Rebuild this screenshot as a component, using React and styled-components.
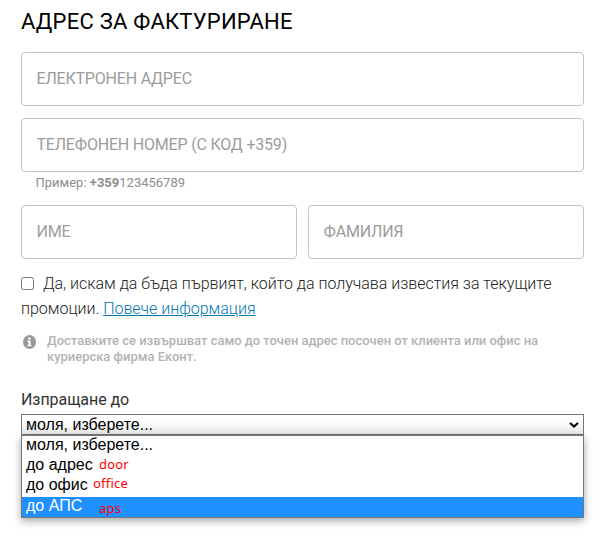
import React from 'react';
import styled, { createGlobalStyle, css } from 'styled-components';

const GlobalStyle = createGlobalStyle`
  *, *::before, *::after {
    box-sizing: border-box;
  }

  body {
    margin: 0;
    background: #fff;
    font-family: Roboto, 'Liberation Sans', sans-serif;
  }
`;

const Form = styled.form`
  display: flex;
  flex-direction: column;
  width: 584px;
  min-height: 551px;
  padding: 8px 0 0 21px;
`;

const Heading = styled.h1`
  margin: 0 0 18px;
  font-size: 22px;
  line-height: 27px;
  height: 26px;
  font-weight: 400;
  letter-spacing: 0.23px;
  text-transform: uppercase;
  white-space: nowrap;
  color: #000;
`;

const Fields = styled.div`
  display: grid;
  grid-template-columns: 1fr 1fr;
  column-gap: 11px;
`;

const Input = styled.input`
  width: 100%;
  min-width: 0;
  height: 54px;
  margin: 0 0 ${({ gap }) => gap || 0}px;
  padding: 0 15px 2px 14.5px;
  border: 1px solid #c4c4c4;
  border-radius: 4px;
  background: #fff;
  font-family: inherit;
  font-size: 16px;
  font-weight: 400;
  letter-spacing: -0.2px;
  outline: none;
  ${({ wide }) =>
    wide &&
    css`
      grid-column: 1 / -1;
    `}

  &::placeholder {
    color: #9c9c9c;
    opacity: 1;
  }
`;

const Hint = styled.p`
  grid-column: 1 / -1;
  margin: 3px 0 14px 14.5px;
  font-size: 13px;
  line-height: 16px;
  color: #8d8d8d;
`;

const Consent = styled.div`
  margin-top: 12px;
  font-size: 16px;
  line-height: 25px;
  font-weight: 300;
  letter-spacing: -0.02px;
  color: #222;
`;

const Checkbox = styled.input`
  width: 13px;
  height: 13px;
  margin: 0 9px 0 0;
  vertical-align: -1px;
`;

const Link = styled.a`
  color: #0079b0;
  text-decoration: underline;
`;

const Notice = styled.div`
  display: flex;
  gap: 11px;
  margin-top: 12px;
  padding-left: 2px;
  font-size: 13px;
  line-height: 16px;
  font-weight: 500;
  letter-spacing: -0.02px;
  color: #b3b3b3;

  svg {
    flex: none;
    margin-top: 2px;
  }

  p {
    margin: 0;
  }
`;

const Label = styled.span`
  margin-top: 25px;
  font-size: 16px;
  line-height: 20px;
  letter-spacing: -0.06px;
  color: #333;
`;

const Select = styled.div`
  position: relative;
  margin-top: 4px;
  font-family: 'Liberation Sans', Arial, sans-serif;
  font-size: 16px;
  color: #000;
`;

const SelectValue = styled.div`
  display: flex;
  align-items: center;
  justify-content: space-between;
  height: 21px;
  padding: 0 4px;
  border: 1px solid #767676;
  line-height: 19px;
  background: linear-gradient(#fff 30%, #e8e8e8);
`;

const Menu = styled.ul`
  position: absolute;
  top: 21px;
  left: 0;
  right: 0;
  height: 83px;
  margin: 0;
  padding: 0;
  border: 1px solid #767676;
  list-style: none;
  background: #fff;
  box-shadow: 0 3px 8px rgba(0, 0, 0, 0.35);
`;

const Option = styled.li`
  position: relative;
  height: 20px;
  padding-left: 4px;
  line-height: 17px;
  color: ${({ active }) => (active ? '#fff' : '#000')};
  background: ${({ active }) => (active ? '#1e90ff' : 'transparent')};

  &:last-child {
    margin-top: 1px;
  }
`;

const Note = styled.span`
  position: absolute;
  left: ${({ x }) => x}px;
  top: ${({ y }) => y}px;
  font-family: 'Noto Sans', 'Open Sans', sans-serif;
  font-size: 13px;
  font-weight: 400;
  letter-spacing: 0.2px;
  line-height: 17px;
  color: #f00;
`;

const InfoIcon = () => (
  <svg width="13" height="14" viewBox="0 0 13 14">
    <ellipse cx="6.5" cy="7" rx="6.5" ry="7" fill="#999" />
    <path d="M5.2 2.4h2.4v2.1H5.2zM4.5 5.6h3v4.4h.9v1.2H4.5V10h.9V6.9h-.9z" fill="#fff" />
  </svg>
);

const Chevron = () => (
  <svg width="10" height="6" viewBox="0 0 10 6" fill="none">
    <path d="M1 1l4 3.6L9 1" stroke="#000" strokeWidth="2" />
  </svg>
);

const options = [
  { label: 'моля, изберете...' },
  { label: 'до адрес', note: 'door', x: 77, y: 0 },
  { label: 'до офис', note: 'office', x: 71, y: -1 },
  { label: 'до АПС', note: 'aps', x: 77, y: 3, active: true },
];

const App = () => (
  <>
    <GlobalStyle />
    <Form>
      <Heading>Адрес за фактуриране</Heading>
      <Fields>
        <Input wide="true" gap={12} placeholder="ЕЛЕКТРОНЕН АДРЕС" />
        <Input wide="true" placeholder="ТЕЛЕФОНЕН НОМЕР (С КОД +359)" />
        <Hint>
          Пример: <b>+359</b>123456789
        </Hint>
        <Input placeholder="ИМЕ" />
        <Input placeholder="ФАМИЛИЯ" />
      </Fields>
      <Consent>
        <Checkbox type="checkbox" />
        Да, искам да бъда първият, който да получава известия за текущите
        <br />
        промоции. <Link href="#">Повече информация</Link>
      </Consent>
      <Notice>
        <InfoIcon />
        <p>
          Доставките се извършват само до точен адрес посочен от клиента или офис на
          <br />
          куриерска фирма Еконт.
        </p>
      </Notice>
      <Label>Изпращане до</Label>
      <Select>
        <SelectValue>
          моля, изберете...
          <Chevron />
        </SelectValue>
        <Menu>
          {options.map(({ label, note, x, y, active }) => (
            <Option key={label} active={active ? 1 : 0}>
              {label}
              {note && (
                <Note x={x} y={y}>
                  {note}
                </Note>
              )}
            </Option>
          ))}
        </Menu>
      </Select>
    </Form>
  </>
);

export default App;
